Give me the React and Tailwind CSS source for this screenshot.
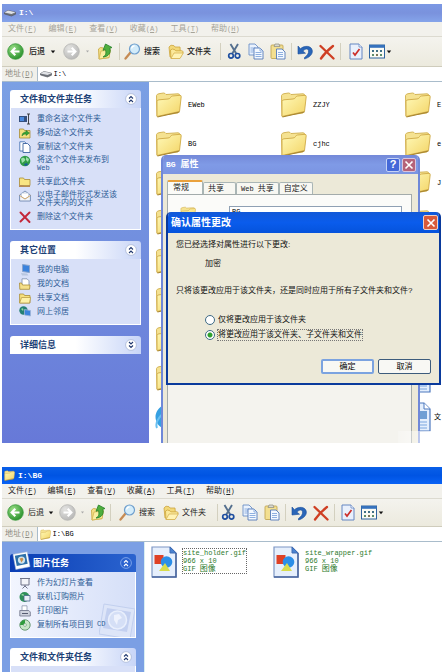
import React from "react";

const mono = "font-['Liberation_Mono','Noto_Sans_CJK_SC',monospace]";

function L({ children }) {
  return <span className={`${mono} text-[7px] leading-none`}>{children}</span>;
}

/* ---------- toolbar icons ---------- */
function Disc({ forward }) {
  const id = forward ? "discF" : "discB";
  return (
    <svg viewBox="0 0 17 17" className="size-[17px] shrink-0">
      <defs>
        <radialGradient id={id} cx="0.35" cy="0.3" r="0.8">
          <stop offset="0" stopColor={forward ? "#e4e4e2" : "#9ade86"} />
          <stop offset="1" stopColor={forward ? "#b4b4b3" : "#1f8a25"} />
        </radialGradient>
      </defs>
      <circle cx="8.5" cy="8.5" r="7.8" fill={`url(#${id})`} stroke={forward ? "#b5b5b2" : "#3b9a3c"} strokeWidth="0.8" />
      <path d={forward ? "M4.5 8.5H12M8.7 4.8l3.7 3.7-3.7 3.7" : "M12.5 8.5H5M8.3 4.8L4.6 8.5l3.7 3.7"} fill="none" stroke="#fff" strokeWidth="2.1" />
    </svg>
  );
}
function Caret({ dim }) {
  return (
    <svg viewBox="0 0 6 4" className="h-[4px] w-[6px] shrink-0">
      <path d={dim ? "M2 0.5h3L3.5 2.5z" : "M0.8 0.5h4.4L3 3.2z"} fill={dim ? "#aaa" : "#111"} />
    </svg>
  );
}
function UpFolder() {
  return (
    <svg viewBox="0 0 16 17" className="h-[17px] w-4 shrink-0">
      <path d="M1.5 6l2-1.500 3 .5 1 1.200 5.500-.5-1 9L2 16z" fill="#f3df86" stroke="#c8a63e" strokeWidth="0.8" />
      <path d="M2 16l2-8 9.500-1-1.500 7.500z" fill="#faeea2" stroke="#cfae48" strokeWidth="0.7" />
      <path d="M6 14c3.300-1.500 3.300-4.500 2.300-7.500L6 7.300 8.500 1l6.500 3.500-2.200.8c1.500 4.500-1.300 8.500-6.800 8.700z" fill="#4fae3d" stroke="#26812a" strokeWidth="0.8" />
    </svg>
  );
}
function SearchIcon() {
  return (
    <svg viewBox="0 0 17 17" className="size-[17px] shrink-0">
      <path d="M6.500 9.500L1.500 15.500" stroke="#c68b54" strokeWidth="2.300" strokeLinecap="round" />
      <circle cx="10.500" cy="6" r="5" fill="#d3ecfa" stroke="#6f9fcd" strokeWidth="1.200" />
      <path d="M7.600 5.500a3.200 3.200 0 013-2.600" stroke="#fff" strokeWidth="1.300" fill="none" />
    </svg>
  );
}
function FoldersIcon() {
  return (
    <svg viewBox="0 0 16 16" className="size-4 shrink-0">
      <path d="M1 3l2-1.800 3 .5 1 1.300h5l.5 8L2 13z" fill="#f2d878" stroke="#cda43c" strokeWidth="0.8" />
      <path d="M3 14.500l-.5-8.500 2-1 2.500.8.8 1H14l1.300 1-3.300 6.200z" fill="#fbe99a" stroke="#cda43c" strokeWidth="0.8" />
      <path d="M3 14.500L6 9h9.300L12 14.500z" fill="#fff3b5" stroke="#d2ac49" strokeWidth="0.7" />
    </svg>
  );
}
function Scissors() {
  return (
    <svg viewBox="0 0 15 17" className="h-[17px] w-[15px] shrink-0" fill="none">
      <path d="M3.500 1l6 10M11 1L5 11" stroke="#55708f" strokeWidth="1.900" />
      <circle cx="4" cy="12.800" r="2.300" stroke="#1f4fa0" strokeWidth="1.700" />
      <circle cx="10.500" cy="12.800" r="2.300" stroke="#1f4fa0" strokeWidth="1.700" />
    </svg>
  );
}
function CopyIcon() {
  return (
    <svg viewBox="0 0 16 17" className="h-[17px] w-4 shrink-0">
      <path d="M1 1h6l3 3v8H1z" fill="#eaf2fd" stroke="#6c8fc6" strokeWidth="0.9" />
      <path d="M2.500 5h5M2.500 7h5M2.500 9h3" stroke="#8fb0e0" />
      <path d="M6 5h6l3 3v8H6z" fill="#f4f9ff" stroke="#5479b8" strokeWidth="0.9" />
      <path d="M12 5v3h3M7.500 9.500h6M7.500 11.500h6M7.500 13.500h6" stroke="#8fb0e0" fill="none" />
    </svg>
  );
}
function PasteIcon() {
  return (
    <svg viewBox="0 0 16 17" className="h-[17px] w-4 shrink-0">
      <rect x="1" y="2" width="12" height="13.500" rx="1" fill="#f3df90" stroke="#c2a655" strokeWidth="0.9" />
      <path d="M4 3.500l1-2.500h4l1 2.500z" fill="#d8d8d0" stroke="#8d8d80" strokeWidth="0.7" />
      <path d="M6.500 6h5.500l3 3v7H6.500z" fill="#f4f9ff" stroke="#5479b8" strokeWidth="0.9" />
      <path d="M8 9.500h5M8 11.500h5M8 13.500h5" stroke="#8fb0e0" />
    </svg>
  );
}
function UndoIcon() {
  return (
    <svg viewBox="0 0 16 16" className="size-4 shrink-0">
      <path d="M1 2l0 8 7.500-.8-2.500-2C8 4.500 11 4.300 11.500 6.800c.4 2.500-1.300 4.700-4 6.700v1.500c5-1.500 8.300-4.700 7.800-8.500C14.500 1.700 7.800 1 3.500 4.700z" fill="#2a66b8" stroke="#1b4f9b" strokeWidth="0.6" />
    </svg>
  );
}
function RedX({ className }) {
  return (
    <svg viewBox="0 0 16 16" className={`${className} shrink-0`}>
      <path d="M1.500 2l13 12.500M14 2C9 6 5 10 2 14.500" stroke="#cf3f23" strokeWidth="2.300" strokeLinecap="round" fill="none" />
    </svg>
  );
}
function CheckDoc() {
  return (
    <svg viewBox="0 0 14 17" className="h-[17px] w-[14px] shrink-0">
      <path d="M1 1h9l3 3v12H1z" fill="#e9f0fc" stroke="#6486c2" />
      <path d="M10 1v3h3" fill="#fff" stroke="#6486c2" strokeWidth="0.8" />
      <path d="M4 9.500l2 2.500 4.500-6" fill="none" stroke="#cc2f2a" strokeWidth="1.700" />
    </svg>
  );
}
function ViewsIcon() {
  return (
    <svg viewBox="0 0 16 15" className="h-[15px] w-4 shrink-0">
      <rect x="0.500" y="1" width="15" height="13" fill="#fbfbf4" stroke="#2f64a0" />
      <rect x="0.500" y="1" width="15" height="2.800" fill="#3672bd" />
      <g fill="#3f6f87">
        <path d="M3 6h2v2H3zM7 6h2v2H7zM11 6h2v2h-2z" />
        <path d="M3 10h2v2H3zM11 10h2v2h-2z" fill="#5d8d6b" />
        <path d="M7 10h2v2H7z" fill="#7b7657" />
      </g>
    </svg>
  );
}

/* ---------- file icons ---------- */
function Folder({ className }) {
  return (
    <svg viewBox="0 0 27 27" className={`${className} shrink-0`}>
      <defs>
        <linearGradient id="fold" x1="0" y1="0" x2="1" y2="1">
          <stop offset="0" stopColor="#fff9b8" />
          <stop offset="1" stopColor="#f3d465" />
        </linearGradient>
      </defs>
      <path d="M1.500 4.500Q2 3 4 2.700L8.500 2q1.500 0 2.500 1.500L23 2.800q2 0 1.500 2L23 22 2 25z" fill="#f5e291" stroke="#cfae4c" strokeWidth="0.9" />
      <path d="M2 25.500L2 10.500q0-1.500 2-1.700L13 8q2-.2 2.500-1.500 .6-1.300 2-1.500L25 4.300q1.300 0 1.200 1.500L24.500 20.500z" fill="url(#fold)" stroke="#cfa945" strokeWidth="0.9" />
      <path d="M2.500 26L24.500 21" stroke="#a78530" strokeWidth="1" />
    </svg>
  );
}
function Drive({ className }) {
  return (
    <svg viewBox="0 0 12 8" className={`${className} shrink-0`}>
      <path d="M0.500 3.500L4 1.500l7.500 1.700v2L7.500 7 .5 5z" fill="#6f737a" stroke="#4f5359" strokeWidth="0.6" />
      <path d="M0.500 3.500L4 1.500l7.500 1.700L7.500 5z" fill="#e0e2e6" />
    </svg>
  );
}
function IeIcon() {
  return (
    <svg viewBox="0 0 27 27" className="size-[27px] shrink-0">
      <circle cx="13" cy="14" r="9" fill="none" stroke="#36a0e2" strokeWidth="7" />
      <path d="M8 14h14" stroke="#2b8dd6" strokeWidth="4" />
      <path d="M2 25C-1 18 10 4 25 3" stroke="#69bff0" strokeWidth="2" fill="none" />
    </svg>
  );
}
function DocIcon({ picture }) {
  return (
    <svg viewBox="0 0 27 30" className="h-[30px] w-[27px] shrink-0">
      <path d="M3 1h17l6 6v22H3z" fill="#e4effd" stroke="#4d78be" strokeWidth="1.200" />
      <path d="M20 1v6h6" fill="#fff" stroke="#4d78be" />
      <path d="M6 11h7M6 14h7M6 17h7M6 20h17M6 23h17M6 26h17" stroke="#78a5df" />
      {picture ? <path d="M15 9h8v8h-8z" fill="#6f9fd4" /> : <path d="M15 11h8M15 14h8M15 17h8" stroke="#78a5df" />}
    </svg>
  );
}
function GifIcon() {
  return (
    <svg viewBox="0 0 26 32" className="h-8 w-[26px] shrink-0">
      <path d="M1 1h18l6 6v24H1z" fill="#e6effc" stroke="#7c96c4" strokeWidth="1.200" />
      <path d="M1 31h24V7" fill="none" stroke="#46639c" strokeWidth="1.500" />
      <path d="M19 1v6h6z" fill="#4a83d2" stroke="#3f6cb3" />
      <rect x="3.500" y="9" width="9" height="9" fill="#df4126" />
      <circle cx="15.500" cy="16" r="5.800" fill="#2b8ee8" />
      <path d="M8 25l6-8 5 8z" fill="#d8dc4e" />
    </svg>
  );
}

/* ---------- side panel icons ---------- */
const side = {
  rename: <><path d="M0 3h8v6H0z" fill="#36517e" /><path d="M1 4h4v4H1z" fill="#4b8be0" /><path d="M9.500 1v10M8 1h3M8 11h3" stroke="#333" strokeWidth="0.9" /></>,
  move: <><path d="M0.500 2h4l1 1.500H11v7.500H.5z" fill="#f4df7e" stroke="#a98d36" strokeWidth="0.8" /><path d="M3 9c0-3 2-4 4-4V3.500L10.500 6 7 8.500V7C5.500 7 4 7.500 3 9z" fill="#38a334" stroke="#1c7723" strokeWidth="0.5" /></>,
  copy: <><path d="M0.800 .8h5l1 1.200v8H.8z" fill="#fff" stroke="#4874b6" strokeWidth="0.9" /><path d="M4 2.500h4.500l2.500 2.500v6.500H4z" fill="#fff" stroke="#3b629f" strokeWidth="0.9" /></>,
  globe: <><circle cx="6" cy="6" r="5.300" fill="#2f9b47" /><path d="M2 4c2-2 3-1 4 0s-1 3-3 4zM7 2l3 2-1 3-2-2z" fill="#9be0a8" /><path d="M5 9l3-1 1 2-3 1z" fill="#1a5c9b" /></>,
  share: <><path d="M0.500 2h4l1 1.500H11v6H.5z" fill="#f8e583" stroke="#a98d36" strokeWidth="0.8" /><path d="M0 9.500c3-1.500 5 1 8 .5l3-1v2H0z" fill="#b58b56" /></>,
  mail: <><path d="M0.600 5L6 1l5.400 4v6H.6z" fill="#f2f5fa" stroke="#6d87b0" strokeWidth="0.9" /><path d="M2.500 3h7v4l-3.500 2-3.500-2z" fill="#fff" stroke="#a9b8d0" strokeWidth="0.6" /><path d="M0.600 5.500L6 9l5.400-3.500" fill="none" stroke="#d09a4b" strokeWidth="0.8" /></>,
  del: <path d="M1.500 1.500l9 9.500M10.500 1.500L1.500 10.500" stroke="#c3263a" strokeWidth="1.900" strokeLinecap="round" />,
  pc: <><path d="M3.500 0.500l7 1v7l-7-1z" fill="#3c83dd" stroke="#8aa4cc" /><path d="M2 9l6 .5 1.500 2H3z" fill="#b8c6df" /></>,
  docs: <><path d="M3 .8h5l2 2v6H3z" fill="#fff" stroke="#7b8cab" strokeWidth="0.8" /><path d="M0.500 5h2l1 2H11l-.5 4.300H.8z" fill="#f5e08b" stroke="#a98d36" strokeWidth="0.8" /></>,
  folder: <><path d="M0.600 2h4l1 1.500H11v7.500H.6z" fill="#f6e07d" stroke="#a98d36" strokeWidth="0.8" /><path d="M0.600 11l2-5.500h9L10.500 11z" fill="#fdf1a8" stroke="#b39640" strokeWidth="0.7" /></>,
  net: <><circle cx="4.500" cy="4.500" r="4.200" fill="#247f74" /><path d="M2 3c2-2 3 0 2 2z" fill="#8edba2" /><path d="M5.500 3.500l6 1v5.500l-6-1z" fill="#3c83dd" stroke="#9fb4d6" strokeWidth="0.8" /></>,
  slides: <><path d="M1 1.500h10M2 2v6h8V2" fill="#f3f4f8" stroke="#6f7388" strokeWidth="1" /><path d="M6 8v2M3.500 11.500L6 9l2.500 2.500" stroke="#6f7388" fill="none" /></>,
  order: <><circle cx="5.500" cy="6" r="5" fill="#2f8f5a" /><path d="M2 4c2-2 3-1 3 1z" fill="#9be0a8" /><path d="M5 4.500h6v5.500H5z" fill="#e8eef8" stroke="#49668c" strokeWidth="0.8" /></>,
  print: <><path d="M3 .8h5v5H3z" fill="#fff" stroke="#7f8aa5" strokeWidth="0.7" /><path d="M0.800 5.500h9l1.500 1.500v4H.8z" fill="#cfd3de" stroke="#6c7288" strokeWidth="0.8" /><path d="M3 8.500h6" stroke="#555b70" /></>,
  cd: <><circle cx="6" cy="6" r="5.200" fill="#c9e6c8" stroke="#5c8f68" strokeWidth="0.9" /><path d="M6 6H1A5 5 0 016 1z" fill="#2f9b3c" /><circle cx="6" cy="6" r="1.400" fill="#fff" stroke="#5c8f68" strokeWidth="0.6" /></>,
};

/* ---------- explorer parts ---------- */
function TitleBar({ active, icon, text }) {
  return (
    <div
      className={`flex items-center gap-[3px] pl-[2px] text-white ${
        active
          ? "h-[17px] bg-linear-to-b from-[#0a5fe8] via-[#0054e3] to-[#0a62f5]"
          : "h-[18px] bg-linear-to-b from-[#7b98e4] via-[#7a92dd] to-[#85a4ea]"
      }`}
    >
      {icon}
      <h1 className={`${mono} text-[8px] font-bold`}>{text}</h1>
    </div>
  );
}

const menus = [["文件", "F"], ["编辑", "E"], ["查看", "V"], ["收藏", "A"], ["工具", "T"], ["帮助", "H"]];

function MenuBar({ active }) {
  return (
    <nav
      className={`flex h-[15px] items-center border-b border-[#dcdad0] bg-[#f2f1ec] pl-[6px] ${
        active ? "gap-[11px] text-[#222]" : "gap-[12px] text-[#a5a398]"
      }`}
    >
      {menus.map(([t, k]) => (
        <button key={k} className="flex items-center whitespace-nowrap">
          {t}
          <L>(<u>{k}</u>)</L>
        </button>
      ))}
    </nav>
  );
}

function ToolBar({ active }) {
  const sep = "flex items-center border-r border-[#d3d0bf]";
  const text = active ? "whitespace-nowrap" : "whitespace-nowrap font-medium";
  return (
    <div className={`flex items-stretch border-b border-[#cfccbc] bg-linear-to-b from-[#f4f3ee] to-[#eceade] text-[#222] ${active ? "py-[5px]" : "py-[6px]"}`}>
      <div className={`${sep} pl-[5px] ${active ? "gap-[5px] pr-[4px]" : "gap-[7px] pr-[6px]"}`}>
        <button className={`flex items-center ${active ? "gap-[4px]" : "gap-[5px]"}`}>
          <Disc />
          <span className={text}>后退</span>
          <Caret />
        </button>
        <button aria-label="前进" className={`flex items-center ${active ? "gap-[3px]" : "gap-[4px]"}`}>
          <Disc forward />
          <Caret dim />
        </button>
        <button aria-label="向上"><UpFolder /></button>
      </div>
      <div className={`${sep} gap-[8px] ${active ? "pr-[11px] pl-[8px]" : "pr-[9px] pl-[4px]"}`}>
        <button className="flex items-center gap-[3px]"><SearchIcon /><span className={text}>搜索</span></button>
        <button className="flex items-center gap-[3px]"><FoldersIcon /><span className={text}>文件夹</span></button>
      </div>
      <div className={`${sep} gap-[6px] pr-[5px] ${active ? "pl-[3px]" : "pl-[6px]"}`}>
        <button aria-label="剪切"><Scissors /></button>
        <button aria-label="复制"><CopyIcon /></button>
        <button aria-label="粘贴"><PasteIcon /></button>
      </div>
      <div className={`${sep} gap-[6px] px-[5px]`}>
        <button aria-label="撤消"><UndoIcon /></button>
        <button aria-label="删除"><RedX className="size-4" /></button>
      </div>
      <div className={`flex items-center gap-[6px] ${active ? "pl-[6px]" : "pl-[8px]"}`}>
        <button aria-label="属性"><CheckDoc /></button>
        <button aria-label="查看" className="flex items-center gap-[1px]"><ViewsIcon /><Caret /></button>
      </div>
    </div>
  );
}

function AddressBar({ id, icon, value }) {
  return (
    <div className="flex h-[15px] items-stretch border-b border-[#a9bccb] bg-[#f1f0ea]">
      <label htmlFor={id} className="flex items-center px-[3px] whitespace-nowrap text-[#8c8a80]">
        地址<L>(<u>D</u>)</L>
      </label>
      <div className="flex flex-1 items-center gap-[2px] border-l border-[#a9bccb] bg-white pl-[2px]">
        {icon}
        <input id={id} defaultValue={value} className={`${mono} min-w-0 flex-1 bg-transparent text-[7px] leading-none text-black outline-none`} />
      </div>
    </div>
  );
}

function Chevron({ down, dark }) {
  return (
    <svg viewBox="0 0 12 12" className="size-3 shrink-0">
      <circle cx="6" cy="6" r="5.400" fill={dark ? "#2a62cf" : "#fff"} stroke={dark ? "#8fb2ef" : "#a9b7d6"} strokeWidth="0.8" />
      <path
        d={down ? "M4 3l2 2 2-2M4 6.500l2 2 2-2" : "M4 5.500l2-2 2 2M4 9l2-2 2 2"}
        fill="none"
        stroke={dark ? "#fff" : "#223a70"}
        strokeWidth="1.100"
      />
    </svg>
  );
}

function Photo({ className }) {
  return (
    <svg viewBox="0 0 20 20" className={`${className} shrink-0`}>
      <path d="M1 3.500L16 .8 19 16.500 4 19.500z" fill="#fff" stroke="#9fb4d0" strokeWidth="0.6" />
      <path d="M3 5l11.500-2 2 10.500L5 15.700z" fill="#2d71a9" />
      <circle cx="10" cy="9.500" r="3.800" fill="#cfe4ee" />
      <path d="M8 8l3-1 1 2-2 3z" fill="#c98f4c" />
    </svg>
  );
}

function PhotoMark() {
  return (
    <svg viewBox="0 0 36 36" className="absolute right-0 bottom-0 size-9 shrink-0" fill="none">
      <path d="M5 3L36 8 31 38 0 33z" fill="#dde5f8" stroke="#c2cfee" />
      <path d="M8 7l24 4-4 20-24-4z" fill="#c3d0f0" />
      <circle cx="18.500" cy="19" r="9" fill="#d5dff6" stroke="#e9effc" strokeWidth="1.500" />
      <path d="M15 14l5-1 3 4-4 2-1 5-3-5z" fill="#eef2fd" />
    </svg>
  );
}

function Panel({ title, items, down, dark, grow, children }) {
  return (
    <section className={`relative ${grow ? "flex flex-1 flex-col" : ""}`}>
      <header
        className={`flex h-[18px] items-center justify-between rounded-t-[3px] pr-[4px] ${
          dark
            ? "bg-linear-to-r from-[#0a3db4] to-[#2a63cf] pl-[23px] text-white"
            : "bg-linear-to-r from-white via-white to-[#c8d5f7] pl-[10px] text-[#1c4176]"
        }`}
      >
        <h2 className="text-[9px] font-bold whitespace-nowrap">{title}</h2>
        <button aria-label={title} className="flex"><Chevron down={down} dark={dark} /></button>
      </header>
      {(items || grow) && (
        <ul
          className={`relative flex flex-col gap-[5px] overflow-hidden border border-t-0 border-white pt-[6px] pr-[4px] pl-[8px] ${
            grow ? "flex-1" : "pb-[8px]"
          } ${dark ? "bg-linear-to-r from-[#f2f5fe] to-[#d5dff8]" : "bg-[#d8e0f8]"}`}
        >
          {children}
          {(items || []).map(([icon, label, second], i) => (
            <li key={i} className="relative">
              <a href="#" className="flex items-start gap-[6px] text-[#2d5c96]">
                <svg viewBox="0 0 12 12" className="-mt-[1px] -mb-[2px] size-3 shrink-0" fill="none">{side[icon]}</svg>
                {second ? (
                  <span className="flex flex-col whitespace-nowrap">
                    <span className="block h-[8px] leading-[8px]">{label}</span>
                    <span className="flex h-[8px] items-center leading-[8px]">{second}</span>
                  </span>
                ) : (
                  <span className="flex h-[9px] items-center gap-[4px] leading-[9px] whitespace-nowrap">{label}</span>
                )}
              </a>
            </li>
          ))}
        </ul>
      )}
    </section>
  );
}

const folderTasks = [
  ["rename", "重命名这个文件夹"],
  ["move", "移动这个文件夹"],
  ["copy", "复制这个文件夹"],
  ["globe", "将这个文件夹发布到", <L>Web</L>],
  ["share", "共享此文件夹"],
  ["mail", "以电子邮件形式发送该", "文件夹内的文件"],
  ["del", "删除这个文件夹"],
];
const places = [["pc", "我的电脑"], ["docs", "我的文档"], ["folder", "共享文档"], ["net", "网上邻居"]];
const pictureTasks = [
  ["slides", "作为幻灯片查看"],
  ["order", "联机订购照片"],
  ["print", "打印图片"],
  ["cd", <>复制所有项目到 <L>CD</L></>],
];

const entries = [
  ["f", "EWeb"], ["f", "ZZJY"], ["f", "E"],
  ["f", "BG"], ["f", "cjhc"], ["f", "e"],
  ["f"], ["f"], ["f", "J"],
  ["f"], ["f"], ["f"],
  ["f"], ["f"], ["f"],
  ["f"], ["f"], ["f"],
  ["f"], ["f"], ["f"],
  ["f"], ["f"], ["d"],
  ["i"], ["f"], ["p", "文"],
];

function Entry({ kind, name }) {
  return (
    <div className={`flex items-center ${kind === "p" ? "gap-[3px]" : "gap-[6px]"}`}>
      {kind === "f" && <Folder className="size-[27px]" />}
      {kind === "i" && <IeIcon />}
      {kind === "d" && <DocIcon />}
      {kind === "p" && <DocIcon picture />}
      {name && <span className={`${mono} text-[7px] text-black`}>{name}</span>}
    </div>
  );
}

function CloseGlyph() {
  return (
    <svg viewBox="0 0 10 10" className="size-[10px]">
      <path d="M1.500 1.500l7 7M8.500 1.500l-7 7" stroke="#fff" strokeWidth="1.600" />
    </svg>
  );
}

function PropertiesDialog() {
  const tab = "h-[12px] rounded-t-[2px] border border-b-0 border-[#a9b5b5] bg-[#f7f7f2] whitespace-nowrap";
  return (
    <div role="dialog" aria-label="BG 属性" className="absolute top-[151px] bottom-0 left-[159px] flex w-[259px] flex-col overflow-hidden rounded-t-[5px] border-x-2 border-[#6f88d8] bg-[#ece9d8]">
      <div className="flex h-[19px] shrink-0 items-center bg-linear-to-b from-[#7489d8] via-[#7f9ae6] to-[#7b95e2] pr-[2px] pl-[3px] text-white">
        <h2 className="flex-1 text-[9px] font-bold"><span className={`${mono} text-[8px]`}>BG </span>属性</h2>
        <div className="flex gap-[2px]">
          <button aria-label="帮助" className="flex size-[14px] items-center justify-center rounded-[2px] border border-[#c5d2f5] bg-[#4468d8] text-[11px] leading-none font-bold">?</button>
          <button aria-label="关闭" className="flex size-[14px] items-center justify-center rounded-[2px] border border-[#d9c4dc] bg-[#b5637a]"><CloseGlyph /></button>
        </div>
      </div>
      <div className="flex flex-1 flex-col px-[4px] pt-[6px]">
        <div role="tablist" className="flex h-[14px] items-end text-[#222]">
          <button role="tab" className="h-[14px] rounded-t-[2px] border border-t-2 border-b-0 border-[#a9b5b5] border-t-[#eaa13c] bg-[#fbfbf8] pr-[13px] pl-[5px] whitespace-nowrap">常规</button>
          <button role="tab" className={`${tab} pr-[11px] pl-[4px]`}>共享</button>
          <button role="tab" className={`${tab} px-[4px]`}><L>Web </L>共享</button>
          <button role="tab" className={`${tab} px-[4px]`}>自定义</button>
        </div>
        <div className="mr-[2px] flex-1 border border-b-0 border-[#a3abab] bg-[#f4f3ee]">
          <div className="flex items-start gap-[33px] bg-[#fbfbf9] px-[12px] pt-[11px] pr-[9px]">
            <Folder className="size-4" />
            <input aria-label="名称" defaultValue="BG" className={`${mono} h-[12px] min-w-0 flex-1 border border-[#8fa0b4] bg-white pl-[2px] text-[7px] outline-none`} />
          </div>
        </div>
      </div>
    </div>
  );
}

function ConfirmDialog() {
  const radio =
    "size-[10px] shrink-0 appearance-none rounded-full border border-[#3d6a85] bg-white checked:bg-[radial-gradient(circle,#2fa02f_0,#2fa02f_2px,#fff_3px)]";
  const btn = "h-[15px] w-[53px] rounded-[2px] bg-[#f8f8f4] text-center text-black";
  return (
    <form role="dialog" aria-label="确认属性更改" onSubmit={(e) => e.preventDefault()} className="absolute top-[208px] right-[1px] left-[164px] overflow-hidden rounded-t-[5px] border-2 border-t-0 border-[#0a3a9c] bg-[#ece9d8] text-[#111]">
      <div className="flex h-[21px] items-center justify-between bg-linear-to-b from-[#1158d8] via-[#0a5cec] to-[#0553dc] pr-[1px] pl-[3px] text-white">
        <h2 className="text-[10px] font-bold">确认属性更改</h2>
        <button type="button" aria-label="关闭" className="flex size-[15px] items-center justify-center rounded-[2px] border border-[#f0cfc4] bg-[#d95a3a]"><CloseGlyph /></button>
      </div>
      <div className="px-[8px] pt-[6px] pb-[9px] leading-[12px]">
        <p>您已经选择对属性进行以下更改:</p>
        <p className="mt-[7px] pl-[29px]">加密</p>
        <p className="mt-[15px] whitespace-nowrap">只将该更改应用于该文件夹，还是同时应用于所有子文件夹和文件?</p>
        <div className="mt-[17px] flex flex-col items-start gap-[3px] pl-[29px]">
          <label className="flex items-center gap-[2px]">
            <input type="radio" name="scope" className={radio} />
            <span className="px-px">仅将更改应用于该文件夹</span>
          </label>
          <label className="flex items-center gap-[2px]">
            <input type="radio" name="scope" defaultChecked className={radio} />
            <span className="border border-dotted border-[#777] leading-[10px]">将更改应用于该文件夹、子文件夹和文件</span>
          </label>
        </div>
        <div className="mt-[18px] flex justify-end gap-[4px]">
          <button className={`${btn} border-2 border-[#7ba3e0]`}><span className="block leading-[11px]">确定</span></button>
          <button type="button" className={`${btn} border border-[#3d5c7c]`}>取消</button>
        </div>
      </div>
    </form>
  );
}

const pictures = [["site_holder.gif", true], ["site_wrapper.gif", false]];

export default function App() {
  return (
    <div className="flex min-h-screen flex-col gap-[24px] bg-white px-[2px] pt-[4px] font-['Liberation_Sans','Noto_Sans_CJK_SC',sans-serif] text-[8px] leading-[12px]">
      <section className="relative">
        <TitleBar icon={<Drive className="h-2 w-3" />} text="I:\" />
        <MenuBar />
        <ToolBar />
        <AddressBar id="addr-drive" icon={<Drive className="h-2 w-3" />} value="I:\" />
        <div className="flex">
          <aside className="flex w-[147px] shrink-0 flex-col gap-[11px] bg-linear-to-b from-[#7ba0e4] to-[#6779d8] px-[8px] pt-[8px]">
            <Panel title="文件和文件夹任务" items={folderTasks} />
            <Panel title="其它位置" items={places} />
            <Panel title="详细信息" down />
          </aside>
          <main className="grid min-w-0 flex-1 auto-rows-[39px] grid-cols-[125px_124px_minmax(0,1fr)] bg-white pt-[3px] pb-[7px] pl-[6px]">
            {entries.map(([kind, name], i) => (
              <Entry key={i} kind={kind} name={name} />
            ))}
          </main>
        </div>
        <PropertiesDialog />
        <ConfirmDialog />
        <div className="absolute right-0 bottom-0 h-[12px] w-[44px] bg-linear-to-r from-white/20 to-white/90" />
      </section>

      <section className="flex flex-1 flex-col">
        <TitleBar active icon={<Folder className="size-[11px]" />} text="I:\BG" />
        <MenuBar active />
        <ToolBar active />
        <AddressBar id="addr-bg" icon={<Folder className="size-[11px]" />} value="I:\BG" />
        <div className="flex flex-1">
          <aside className="flex w-[142px] shrink-0 flex-col gap-[10px] bg-[#7b9fe4] px-[8px] pt-[12px]">
            <Panel title="图片任务" items={pictureTasks} dark>
              <PhotoMark />
            </Panel>
            <Panel title="文件和文件夹任务" grow />
          </aside>
          <main className="flex flex-1 gap-[28px] border-l border-[#d8eef2] bg-white pt-[4px] pl-[6px]">
            {pictures.map(([name, focused]) => (
              <div key={name} className="flex w-[94px] items-start gap-[5px]">
                <GifIcon />
                <p className={`${mono} mt-[2px] border text-[7px] leading-[8px] whitespace-nowrap text-[#2c7a2c] ${focused ? "border-dotted border-[#666]" : "border-transparent"}`}>
                  {name}<br />966 x 10<br />GIF <span className="text-[8px]">图像</span>
                </p>
              </div>
            ))}
          </main>
        </div>
        <Photo className="absolute top-[551px] left-[12px] size-[19px]" />
      </section>
    </div>
  );
}
